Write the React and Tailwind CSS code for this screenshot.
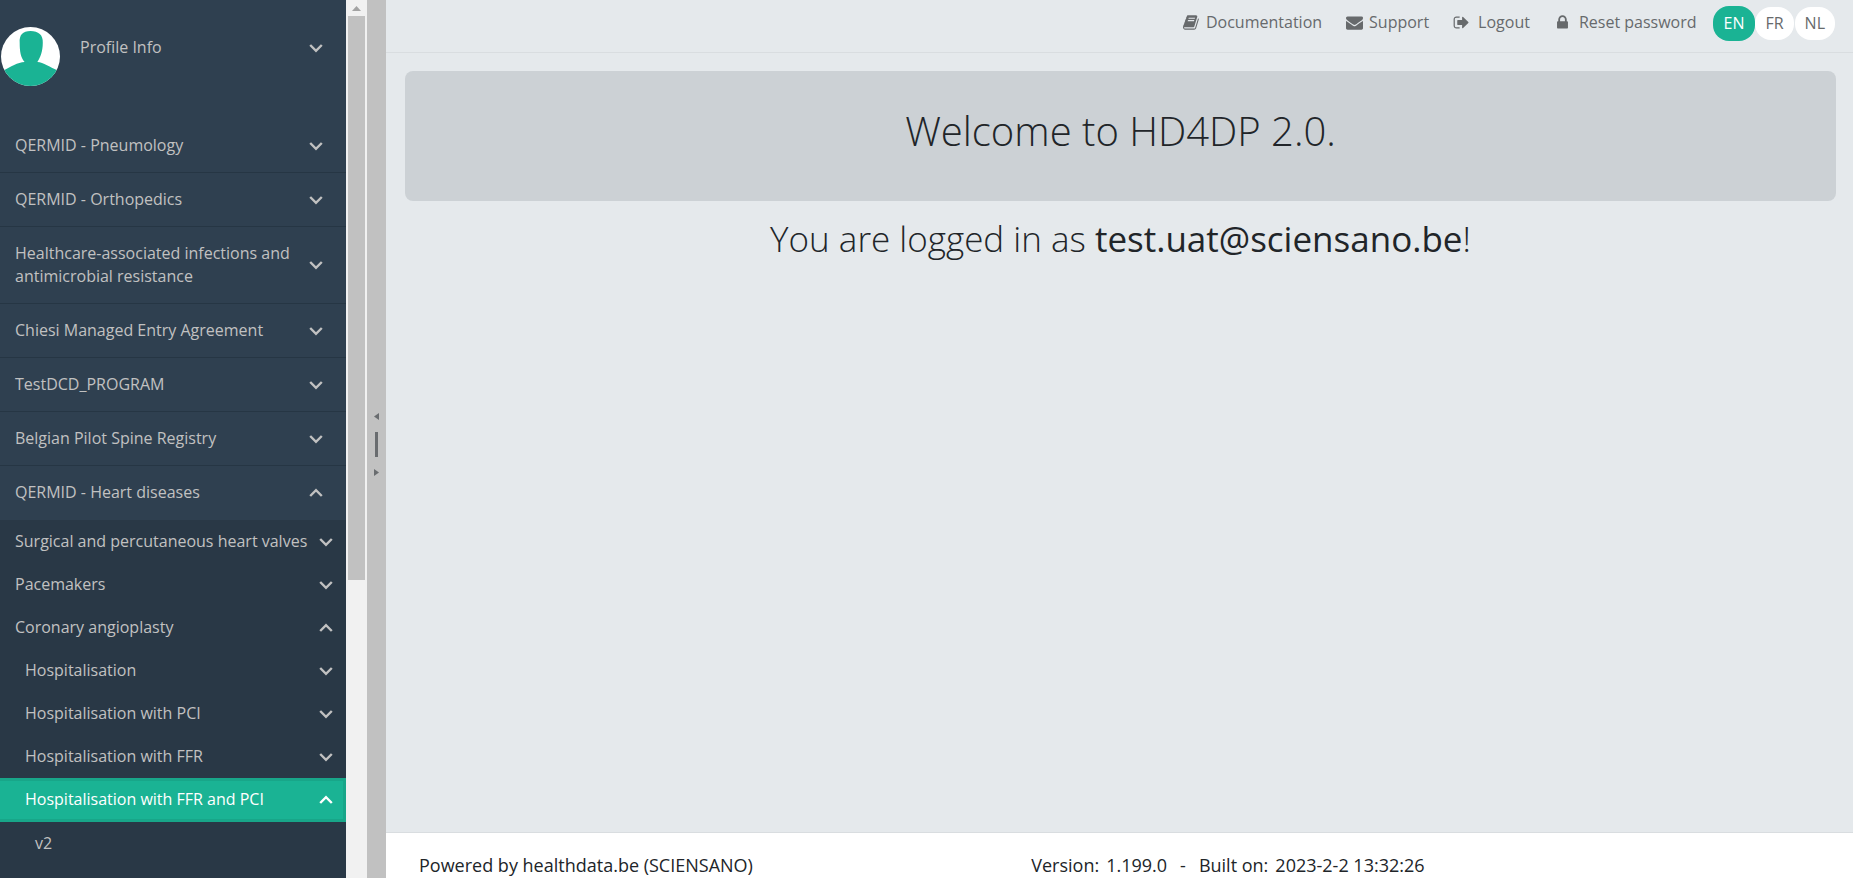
import { useState } from "react";

const FA = {
  book: "M1639 478q40 57 18 129l-275 906q-19 64-76.500 107.500t-122.500 43.500h-923q-77 0-148.500-53.500t-99.500-131.500q-24-67-2-127 0-4 3-27t4-37q1-8-3-21.500t-3-19.500q2-11 8-21t16.500-23.500 16.500-23.500q23-38 45-91.500t30-91.500q3-10 .5-30t-.5-28q3-11 17-28t17-23q21-36 42-92t25-90q1-9-2.500-32t.5-28q4-13 22-30.500t22-22.500q19-26 42.500-84.500t27.500-96.500q1-8-3-25.500t-2-26.500q2-8 9-18t18-23 17-21q8-12 16.500-30.500t15-35 16-36 19.500-32 26.500-23.500 36-11.500 47.500 5.500l-1 3q38-9 51-9h761q74 0 114 56t18 130l-274 906q-36 119-71.500 153.500t-128.500 34.500h-869q-27 0-38 15-11 16-1 43 24 70 144 70h923q29 0 56-15.500t35-41.500l300-987q7-22 5-57 38 15 59 43zm-1064 2q-4 13 2 22.500t20 9.500h608q13 0 25.500-9.500t16.500-22.500l21-64q4-13-2-22.500t-20-9.500h-608q-13 0-25.500 9.500t-16.500 22.500zm-83 256q-4 13 2 22.500t20 9.500h608q13 0 25.500-9.500t16.500-22.500l21-64q4-13-2-22.500t-20-9.500h-608q-13 0-25.500 9.500t-16.500 22.500z",
  envelope: "M1792 710v794q0 66-47 113t-113 47h-1472q-66 0-113-47t-47-113v-794q44 49 101 87 362 246 497 345 57 42 92.500 65.500t94.500 48 110 24.500h2q51 0 110-24.500t94.500-48 92.500-65.500q170-123 498-345 57-39 100-87zm0-294q0 79-49 151t-122 123q-376 261-468 325-10 7-42.500 31t-54 38.500-52 32.500-57.500 27-50 9h-2q-23 0-50-9t-57.500-27-52-32.500-54-38.500-42.500-31q-91-64-262-182.500t-205-142.500q-62-42-117-115.500t-55-136.500q0-78 41.500-130t118.500-52h1472q65 0 112.500 47t47.500 113z",
  signOut: "M704 1440q0 4 1 20t.5 26.500-3 23.500-10 19.500-20.500 6.500h-320q-119 0-203.500-84.500t-84.500-203.500v-704q0-119 84.500-203.500t203.500-84.500h320q13 0 22.500 9.500t9.500 22.500q0 4 1 20t.5 26.500-3 23.500-10 19.500-20.500 6.500h-320q-66 0-113 47t-47 113v704q0 66 47 113t113 47h312l11.500 1 11.500 3 8 5.500 7 9 2 13.500zm928-544q0 26-19 45l-544 544q-19 19-45 19t-45-19-19-45v-288h-448q-26 0-45-19t-19-45v-384q0-26 19-45t45-19h448v-288q0-26 19-45t45-19 45 19l544 544q19 19 19 45z",
  lock: "M640 768h512v-192q0-106-75-181t-181-75-181 75-75 181v192zm832 96v576q0 40-28 68t-68 28h-960q-40 0-68-28t-28-68v-576q0-40 28-68t68-28h32v-192q0-184 132-316t316-132 316 132 132 316v192h32q40 0 68 28t28 68z",
};

const PROGRAMS = [
  { label: "QERMID - Pneumology" },
  { label: "QERMID - Orthopedics" },
  { label: "Healthcare-associated infections and antimicrobial resistance" },
  { label: "Chiesi Managed Entry Agreement" },
  { label: "TestDCD_PROGRAM" },
  { label: "Belgian Pilot Spine Registry" },
  { label: "QERMID - Heart diseases", open: true },
];

const HEART_ITEMS = [
  { label: "Surgical and percutaneous heart valves" },
  { label: "Pacemakers" },
  { label: "Coronary angioplasty", open: true },
  { label: "Hospitalisation", nested: true },
  { label: "Hospitalisation with PCI", nested: true },
  { label: "Hospitalisation with FFR", nested: true },
  { label: "Hospitalisation with FFR and PCI", nested: true, open: true, active: true },
];

const LANGS = ["EN", "FR", "NL"];

const Icon = ({ name, className }) => (
  <svg viewBox="0 0 1792 1792" className={className} fill="currentColor" aria-hidden="true">
    <path d={FA[name]} />
  </svg>
);

const Chevron = ({ up = false }) => (
  <svg viewBox="0 0 14 10" className="h-[10px] w-[14px] shrink-0" fill="none" stroke="currentColor" strokeWidth="2.4" aria-hidden="true">
    <path d={up ? "M1.2 8 7 2.2 12.800 8" : "M1.2 2 7 7.800 12.800 2"} />
  </svg>
);

const ProgramRow = ({ label, open = false }) => (
  <button
    type="button"
    aria-expanded={open}
    className={[
      "flex w-full items-center justify-between border-b py-[15px] pl-[15px] pr-[23px] text-left",
      open ? "border-transparent" : "border-[#263644]",
    ].join(" ")}
  >
    <span className="w-[285px]">{label}</span>
    <Chevron up={open} />
  </button>
);

const SubRow = ({ label, nested, open = false, active }) => (
  <button
    type="button"
    aria-expanded={open}
    className={[
      "flex w-full items-center justify-between whitespace-nowrap pr-[13px] text-left",
      nested ? "pl-[25px]" : "pl-[15px]",
      active
        ? "h-[44px] bg-[#1ab394] pb-px text-white shadow-[inset_-3px_0_0_#18a689,inset_0_3px_0_#18a689,inset_0_-3px_0_#18a689]"
        : "h-[43px]",
    ].join(" ")}
  >
    {label}
    <Chevron up={open} />
  </button>
);

const NavLink = ({ icon, label, className }) => (
  <a href="#" className={["flex items-center", className].join(" ")}>
    <Icon name={icon} className="h-[17px] w-[17px]" />
    {label}
  </a>
);

export default function App() {
  const [lang, setLang] = useState("EN");

  return (
    <div className="flex h-screen overflow-hidden bg-[#e5e9ec] font-['Open_Sans',sans-serif] text-[16px] leading-[23px] text-[#212529]">
      {/* sidebar */}
      <nav className="w-[346px] shrink-0 overflow-hidden bg-[#2f4050] text-[#c1c1c1]">
        <div className="flex h-[119px] items-start pl-px pr-[23px] pt-[27px]">
          <svg viewBox="0 0 60 60" className="h-[59px] w-[59px] shrink-0" aria-hidden="true">
            <defs>
              <clipPath id="avatar">
                <circle cx="30" cy="30" r="30" />
              </clipPath>
            </defs>
            <g clipPath="url(#avatar)">
              <rect width="60" height="60" fill="#fff" />
              <path
                d="M30 4c8 0 13 4 12.500 12C42.500 25 40 31 37 35.500c6 .5 13 5 21 9V60H2V44.500C10 40 17 36 24 35.500 20 31 19 25 19 16 18.500 8 22 4 30 4z"
                fill="#1ab394"
              />
            </g>
          </svg>
          <button type="button" className="ml-5 mt-[9px] flex flex-1 items-center justify-between text-left">
            Profile Info
            <Chevron />
          </button>
        </div>

        {PROGRAMS.map((program) => (
          <ProgramRow key={program.label} {...program} />
        ))}

        <div className="bg-[#293846]">
          {HEART_ITEMS.map((item) => (
            <SubRow key={item.label} {...item} />
          ))}
          <a href="#" className="flex h-[60px] items-start pl-[35px] pt-[10px]">
            v2
          </a>
        </div>
      </nav>

      {/* sidebar scrollbar */}
      <div className="flex w-[21px] shrink-0 flex-col bg-[#f1f1f1] px-[2px]">
        <div className="grid h-4 shrink-0 place-items-center">
          <svg viewBox="0 0 9 5" className="h-[5px] w-[9px]" aria-hidden="true">
            <path d="M0 5 4.500 0 9 5z" fill="#a3a3a3" />
          </svg>
        </div>
        <div className="h-[564px] bg-[#c1c1c1]" />
      </div>

      {/* splitter */}
      <div className="flex w-[19px] shrink-0 flex-col items-center justify-center gap-3 bg-[#c1c1c1] pt-[10px] text-[#696c6f]">
        <svg viewBox="0 0 5 7" className="h-[7px] w-[5px]" aria-hidden="true">
          <path d="M5 0v7L0 3.500z" fill="currentColor" />
        </svg>
        <div className="h-[25px] w-[3px] bg-[#696c6f]" />
        <svg viewBox="0 0 5 7" className="h-[7px] w-[5px]" aria-hidden="true">
          <path d="M0 0v7l5-3.500z" fill="currentColor" />
        </svg>
      </div>

      <div className="flex min-w-0 flex-1 flex-col">
        {/* top bar */}
        <header className="flex h-[53px] shrink-0 items-start justify-end border-b border-[#d9dde0] pr-[17px] pt-[6px] text-[#676a6c]">
          <div className="flex h-8 items-center gap-6">
            <NavLink icon="book" label="Documentation" className="gap-[6px]" />
            <NavLink icon="envelope" label="Support" className="gap-[6px]" />
            <NavLink icon="signOut" label="Logout" className="gap-2" />
            <NavLink icon="lock" label="Reset password" className="gap-2" />
          </div>
          <div className="ml-4 flex h-[35px] items-center">
            {LANGS.map((code) => (
              <button
                key={code}
                type="button"
                onClick={() => setLang(code)}
                className={
                  code === lang
                    ? "h-[35px] rounded-[16px] bg-[#1ab394] px-[11px] text-white"
                    : "mr-px h-[33px] rounded-[16px] bg-white px-[10px]"
                }
              >
                {code}
              </button>
            ))}
          </div>
        </header>

        <main className="flex-1 pl-[19px] pr-[17px] pt-[18px] text-center font-light">
          <div className="grid h-[130px] place-items-center rounded-lg bg-[#ccd1d5] pb-[10px]">
            <h1 className="text-[40px] leading-[48px]">Welcome to HD4DP 2.0.</h1>
          </div>
          <h2 className="mt-[17px] text-[35px] leading-[42px]">
            You are logged in as <span className="font-normal">test.uat@sciensano.be</span>!
          </h2>
        </main>

        <footer className="grid h-[46px] shrink-0 grid-cols-12 border-t border-[#d9dde0] bg-white pt-[19px] text-[18px] leading-[27px]">
          <div className="col-span-5 pl-[33px]">Powered by healthdata.be (SCIENSANO)</div>
          <div className="col-span-7 flex gap-[7px] pl-[34px]">
            <span>Version:</span>
            <span>1.199.0</span>
            <span className="px-[6px]">-</span>
            <span>Built on:</span>
            <span>2023-2-2 13:32:26</span>
          </div>
        </footer>
      </div>
    </div>
  );
}
